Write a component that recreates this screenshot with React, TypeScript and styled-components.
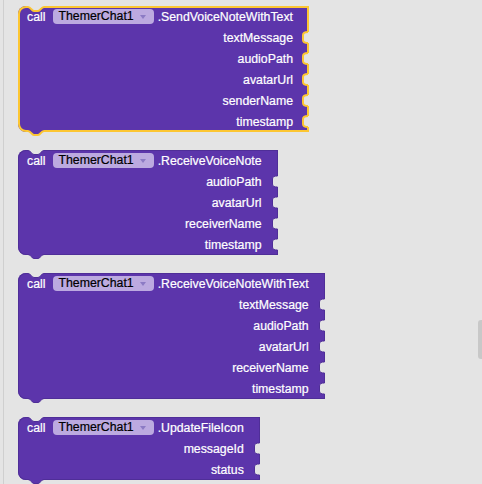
import React from "react";
import styled, { createGlobalStyle } from "styled-components";

const BG = "#e4e4e4";
const PURPLE = "#5c35ab";
const EDGE = "#4f2e98";
const SELECT = "#fcc632";

const GlobalStyle = createGlobalStyle`
  html, body { margin: 0; padding: 0; background: ${BG}; }
  body { font-family: "Liberation Sans", Arial, sans-serif; }
  #root { width: 482px; height: 484px; overflow: hidden; }
`;

const Workspace = styled.main`
  position: relative;
  width: 482px;
  height: 484px;
  box-sizing: border-box;
  padding-left: 3px;
  background: ${BG};
  overflow: hidden;
`;

const Canvas = styled.div`
  height: 100%;
  box-sizing: border-box;
  border-left: 1px solid #cfcfcf;
  padding: 6px 0 0 14px;
  display: flex;
  flex-direction: column;
  align-items: flex-start;
  gap: 18px;
`;

const Scrollbar = styled.div`
  position: absolute;
  right: 0;
  top: 320px;
  width: 4px;
  height: 39px;
  background: #c8c8c8;
  border-radius: 3px 0 0 3px;
`;

const BlockBody = styled.div<{ $selected?: boolean }>`
  position: relative;
  display: flex;
  flex-direction: column;
  padding-left: 9px;
  background: ${PURPLE};
  border-radius: 8px 0 0 8px;
  box-shadow: inset 0 0 0 ${(p) => (p.$selected ? 2 : 1)}px
    ${(p) => (p.$selected ? SELECT : EDGE)};
  color: #fff;
  font-size: 12.3px;
  -webkit-text-stroke: 0.2px currentColor;
  white-space: nowrap;
`;

const HeaderRow = styled.div`
  display: flex;
  align-items: center;
  height: 21px;
  padding-right: 16px;
`;

const CallLabel = styled.span`
  margin-right: 8px;
`;

const ComponentPill = styled.span`
  display: inline-flex;
  align-items: center;
  height: 15px;
  line-height: 15px;
  padding: 0 8px 0 5px;
  border-radius: 4px;
  background: #bcaae0;
  color: #000;
  margin-right: 4px;
`;

const PillArrow = styled.svg`
  margin-left: 6px;
  width: 6px;
  height: 4px;
`;

const MethodName = styled.span``;

const ParamRow = styled.div`
  display: flex;
  align-items: center;
  justify-content: flex-end;
  height: 21px;
`;

const ParamLabel = styled.span``;

const SocketSvg = styled.svg`
  width: 10px;
  height: 13px;
  margin-left: 6px;
  flex: none;
`;

const TopNotchSvg = styled.svg`
  position: absolute;
  left: 10px;
  top: 0;
  width: 16px;
  height: 7px;
`;

const BottomTabSvg = styled.svg<{ $bw: number }>`
  position: absolute;
  left: 10px;
  bottom: -5px;
  width: 16px;
  height: ${(p) => p.$bw + 5}px;
  overflow: visible;
`;

function dipPath(c: number) {
  return `M0,${c} C3,${c} 3.5,${c + 4} 6,${c + 4} H10 C12.5,${c + 4} 13,${c} 16,${c}`;
}

function TopNotch({ bw, color }: { bw: number; color: string }) {
  const c = bw / 2;
  return (
    <TopNotchSvg viewBox="0 0 16 7">
      <path d={`M0,0 H16 V${c} C13,${c} 12.5,${c + 4} 10,${c + 4} H6 C3.5,${c + 4} 3,${c} 0,${c} Z`} fill={BG} />
      <path d={dipPath(c)} fill="none" stroke={color} strokeWidth={bw} />
    </TopNotchSvg>
  );
}

function BottomTab({ bw, color }: { bw: number; color: string }) {
  const c = bw / 2;
  return (
    <BottomTabSvg $bw={bw} viewBox={`0 0 16 ${bw + 5}`}>
      <path d={`M0,0 H16 V${c} C13,${c} 12.5,${c + 4} 10,${c + 4} H6 C3.5,${c + 4} 3,${c} 0,${c} Z`} fill={PURPLE} />
      <path d={dipPath(c)} fill="none" stroke={color} strokeWidth={bw} />
    </BottomTabSvg>
  );
}

function Socket({ bw, color }: { bw: number; color: string }) {
  const e = 10 - bw / 2;
  const y0 = 1;
  const y1 = 12;
  const x = e - 5;
  return (
    <SocketSvg viewBox="0 0 10 13">
      <path
        d={`M10,${y0} H${e} C${e - 3},${y0} ${x},${y0 + 0.5} ${x},${y0 + 3} V${y1 - 3} C${x},${y1 - 0.5} ${e - 3},${y1} ${e},${y1} H10 Z`}
        fill={BG}
      />
      <path
        d={`M${e},${y0} C${e - 3},${y0} ${x},${y0 + 0.5} ${x},${y0 + 3} V${y1 - 3} C${x},${y1 - 0.5} ${e - 3},${y1} ${e},${y1}`}
        fill="none"
        stroke={color}
        strokeWidth={bw}
      />
    </SocketSvg>
  );
}

type BlockData = { method: string; params: string[]; selected?: boolean };

const blocks: BlockData[] = [
  {
    method: ".SendVoiceNoteWithText",
    params: ["textMessage", "audioPath", "avatarUrl", "senderName", "timestamp"],
    selected: true,
  },
  {
    method: ".ReceiveVoiceNote",
    params: ["audioPath", "avatarUrl", "receiverName", "timestamp"],
  },
  {
    method: ".ReceiveVoiceNoteWithText",
    params: ["textMessage", "audioPath", "avatarUrl", "receiverName", "timestamp"],
  },
  {
    method: ".UpdateFileIcon",
    params: ["messageId", "status"],
  },
];

function CallBlock({ method, params, selected }: BlockData) {
  const bw = selected ? 2 : 1;
  const color = selected ? SELECT : EDGE;
  return (
    <BlockBody $selected={selected}>
      <TopNotch bw={bw} color={color} />
      <HeaderRow>
        <CallLabel>call</CallLabel>
        <ComponentPill>
          ThemerChat1
          <PillArrow viewBox="0 0 6 4">
            <path d="M0,0 H6 L3,4 Z" fill="#8c7bc4" />
          </PillArrow>
        </ComponentPill>
        <MethodName>{method}</MethodName>
      </HeaderRow>
      {params.map((p) => (
        <ParamRow key={p}>
          <ParamLabel>{p}</ParamLabel>
          <Socket bw={bw} color={color} />
        </ParamRow>
      ))}
      <BottomTab bw={bw} color={color} />
    </BlockBody>
  );
}

export default function App() {
  return (
    <>
      <GlobalStyle />
      <Workspace>
        <Canvas>
          {blocks.map((b) => (
            <CallBlock key={b.method} {...b} />
          ))}
        </Canvas>
        <Scrollbar />
      </Workspace>
    </>
  );
}
